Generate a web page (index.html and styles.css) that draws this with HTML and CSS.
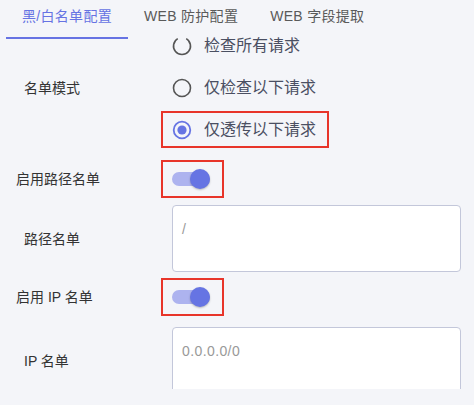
FILE: index.html
```html
<!DOCTYPE html>
<html lang="zh-CN">
<head>
<meta charset="utf-8">
<title>名单配置</title>
<link rel="stylesheet" href="styles.css">
</head>
<body>
<div class="tabs">
  <div class="tab active">黑/白名单配置</div>
  <div class="tab">WEB 防护配置</div>
  <div class="tab">WEB 字段提取</div>
</div>
<div class="content">
  <div class="form">
    <div class="row">
      <div class="label pad24">名单模式</div>
      <div class="radios">
        <div class="opt">
          <svg class="radio" viewBox="0 0 20 20" width="20" height="20"><path d="M14.25 2.64 A8.5 8.5 0 1 1 5.75 2.64" fill="none" stroke="#555" stroke-width="1.6"/></svg>
          <span class="opt-text">检查所有请求</span>
        </div>
        <div class="opt">
          <svg class="radio" viewBox="0 0 20 20" width="20" height="20"><circle cx="10" cy="10" r="8.5" fill="none" stroke="#555" stroke-width="1.6"/></svg>
          <span class="opt-text">仅检查以下请求</span>
        </div>
        <div class="opt marked">
          <svg class="radio" viewBox="0 0 20 20" width="20" height="20"><circle cx="10" cy="10" r="8.3" fill="none" stroke="#6674e3" stroke-width="1.8"/><circle cx="10" cy="10" r="4.6" fill="#6674e3"/></svg>
          <span class="opt-text">仅透传以下请求</span>
        </div>
      </div>
    </div>
    <div class="row toggle-row first-toggle">
      <div class="label pad16">启用路径名单</div>
      <div class="toggle-box marked">
        <div class="toggle"><div class="track"></div><div class="knob"></div></div>
      </div>
    </div>
    <div class="row area-row first-area">
      <div class="label pad24">路径名单</div>
      <textarea class="area" placeholder="/"></textarea>
    </div>
    <div class="row toggle-row second-toggle">
      <div class="label pad16">启用 IP 名单</div>
      <div class="toggle-box marked">
        <div class="toggle"><div class="track"></div><div class="knob"></div></div>
      </div>
    </div>
    <div class="row area-row second-area">
      <div class="label pad24">IP 名单</div>
      <textarea class="area" placeholder="0.0.0.0/0"></textarea>
    </div>
  </div>
</div>
</body>
</html>
```
FILE: styles.css
```css
* { box-sizing: border-box; }
html, body {
  margin: 0;
  padding: 0;
  background: #f4f5f9;
  font-family: "Liberation Sans", "Noto Sans CJK SC", sans-serif;
  color: #333;
}
.tabs {
  display: flex;
  height: 39px;
  padding-left: 6px;
  margin-bottom: -12px;
  position: relative;
  z-index: 1;
}
.tab {
  height: 39px;
  padding: 6px 16px 0;
  font-size: 14px;
  line-height: 20px;
  letter-spacing: 0.3px;
  color: #5a5a5a;
  border-bottom: 2px solid transparent;
}
.tab.active {
  color: #6673e3;
  border-bottom-color: #6673e3;
}
.content {
  height: 362px;
  overflow: hidden;
}
.row {
  display: flex;
  align-items: center;
}
.label {
  flex: none;
  width: 172px;
  font-size: 14px;
  line-height: 20px;
  color: #333;
}
.pad24 { padding-left: 24px; }
.pad16 { padding-left: 16px; }
.radios {
  display: flex;
  flex-direction: column;
  gap: 5px;
  margin-left: -11px;
}
.opt {
  display: flex;
  align-items: center;
  height: 37px;
  width: fit-content;
  padding: 0 11px 0 9px;
  border: 2px solid transparent;
}
.marked {
  border-color: #e8352a !important;
}
.radio { flex: none; display: block; }
.opt-text {
  margin-left: 12px;
  font-size: 16px;
  line-height: 20px;
  color: #4a4f62;
}
.first-toggle { margin-top: 12px; }
.second-toggle { margin-top: 6px; }
.toggle-box {
  margin-left: -11px;
  height: 38px;
  padding: 0 12px 0 9px;
  border: 2px solid transparent;
  display: flex;
  align-items: center;
}
.toggle {
  position: relative;
  width: 38px;
  height: 14px;
}
.track {
  width: 38px;
  height: 14px;
  border-radius: 7px;
  background: #adb3ef;
}
.knob {
  position: absolute;
  right: 0;
  top: -3px;
  width: 20px;
  height: 20px;
  border-radius: 50%;
  background: #6674e3;
  box-shadow: 0 1px 2px rgba(0,0,0,0.25);
}
.first-area { margin-top: 7px; }
.second-area { margin-top: 11px; }
.area {
  display: block;
  width: 289px;
  height: 67px;
  margin: 0;
  padding: 13px 9px;
  border: 1px solid #c3c7da;
  border-radius: 4px;
  background: #fff;
  resize: none;
  font-family: "Liberation Sans", "Noto Sans CJK SC", sans-serif;
  font-size: 14px;
  line-height: 20px;
  color: #333;
}
.area::placeholder {
  color: #999;
  letter-spacing: 0.4px;
}
```
